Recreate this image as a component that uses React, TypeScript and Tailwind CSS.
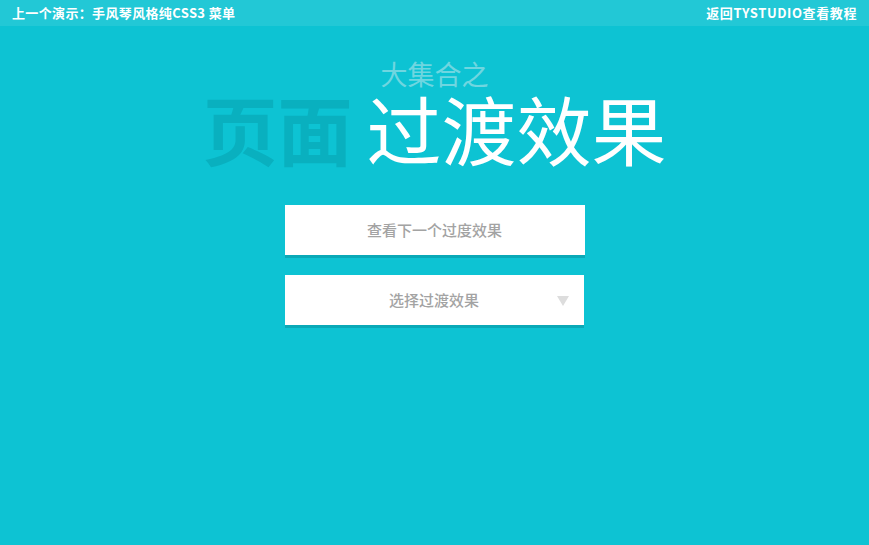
export default function App() {
  const cjk = "font-['Noto_Sans_CJK_SC','Noto_Sans',sans-serif]";

  return (
    <div className={`min-h-[545px] w-full bg-[#0dc3d3] ${cjk}`}>
      <div className="flex h-[26px] items-center justify-between bg-[#22c8d6] px-3 text-[13px] font-bold text-white">
        <a href="#" className="tracking-[0.35px]">上一个演示：手风琴风格纯CSS3 菜单</a>
        <a href="#" className="tracking-[0.6px]">返回TYSTUDIO查看教程</a>
      </div>

      <header className="flex flex-col items-center pt-[31px]">
        <p className="h-[33px] text-[27px] leading-[33px] text-[#6fd6e0]">大集合之</p>
        <h1 className="flex h-[75px] items-center text-[75px] leading-none">
          <span className="font-bold text-[#09b0bf]">页面</span>
          <span className="pl-[14px] text-white">过渡效果</span>
        </h1>
      </header>

      <div className="mt-[40px] flex flex-col items-center gap-[20px]">
        <button className="h-[50px] w-[300px] bg-white text-[15px] font-medium text-[#a3a3a3] shadow-[0_3px_0_#0aa9b7]">
          查看下一个过度效果
        </button>
        <div className="relative flex h-[50px] w-[299px] items-center justify-center bg-white text-[15px] font-medium text-[#a3a3a3] shadow-[0_3px_0_#0aa9b7]">
          <span className="pr-px">选择过渡效果</span>
          <svg
            className="absolute right-[15px] top-[21px]"
            width="12"
            height="10"
            viewBox="0 0 12 10"
          >
            <polygon points="0,0 12,0 6,10" fill="#dddddd" />
          </svg>
        </div>
      </div>
    </div>
  );
}
